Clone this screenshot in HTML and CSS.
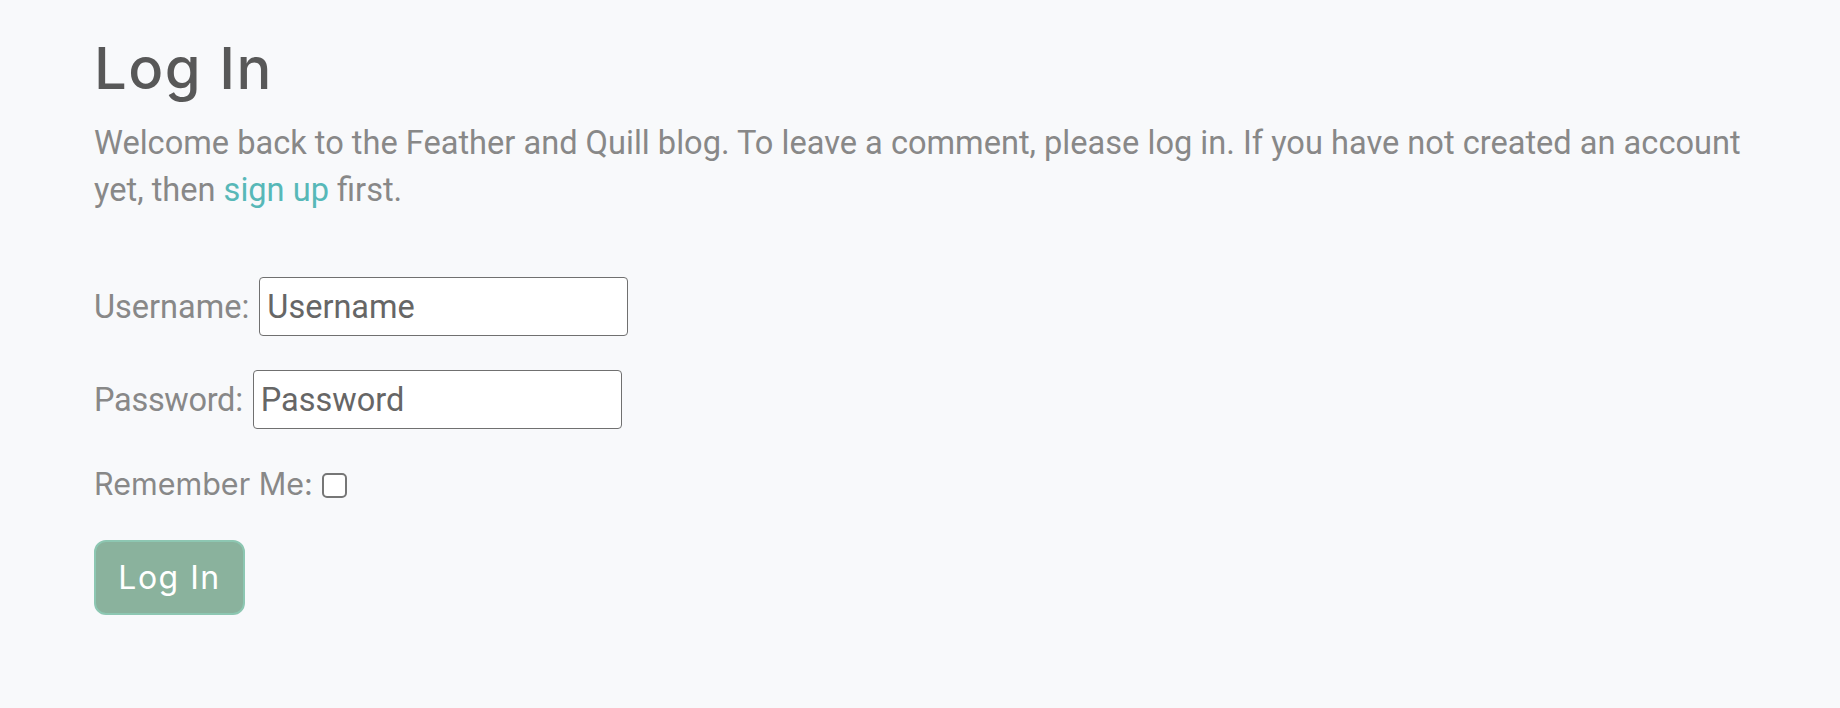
FILE: index.html
```html
<!DOCTYPE html>
<html lang="en">
<head>
<meta charset="utf-8">
<title>Log In</title>
<link rel="stylesheet" href="styles.css">
</head>
<body>
<main class="page">
  <h1 class="title">Log In</h1>
  <p class="intro">Welcome back to the Feather and Quill blog. To leave a comment, please log in. If you have not created an account yet, then <a class="link" href="#">sign up</a> first.</p>
  <form class="form">
    <div class="row">
      <label class="label" for="username">Username:</label>
      <input class="field field-user" id="username" type="text" placeholder="Username">
    </div>
    <div class="row">
      <label class="label label-pass" for="password">Password:</label>
      <input class="field" id="password" type="password" placeholder="Password">
    </div>
    <div class="row row-check">
      <label class="label label-alt" for="remember">Remember Me:</label>
      <input class="check" id="remember" type="checkbox">
    </div>
    <div class="row row-btn">
      <button class="btn" type="button">Log In</button>
    </div>
  </form>
</main>
</body>
</html>
```

FILE: styles.css
```css
html, body {
  margin: 0;
  padding: 0;
  background: #f8f9fb;
}

.page {
  padding: 34px 94px 0;
  font-family: Roboto, "Liberation Sans", sans-serif;
  color: #888888;
}

.title {
  margin: 0;
  font-family: Inter, "Noto Sans", sans-serif;
  font-weight: 500;
  font-size: 58px;
  line-height: 68px;
  color: #585858;
  letter-spacing: 1.5px;
}

.intro {
  margin: 18px 0 0;
  max-width: 1690px;
  font-size: 32.6px;
  line-height: 47px;
}

.link {
  color: #57b8b8;
  text-decoration: none;
}

.form {
  margin-top: 63px;
  display: flex;
  flex-direction: column;
}

.row {
  display: flex;
  align-items: center;
  gap: 10px;
  height: 59px;
}

.row + .row {
  margin-top: 34px;
}

.label {
  font-size: 32.5px;
  color: #888888;
}

.label-pass {
  letter-spacing: -0.3px;
}

.field {
  box-sizing: border-box;
  width: 369px;
  height: 59px;
  margin: 0;
  padding: 0 7px;
  border: 1.5px solid #707070;
  border-radius: 4px;
  background: #ffffff;
  font-family: Roboto, "Liberation Sans", sans-serif;
  font-size: 32.5px;
  color: #666666;
  outline: none;
}

.field::placeholder {
  color: #666666;
  opacity: 1;
}

.row + .row-check {
  margin-top: 41px;
}

.row-check {
  height: 30px;
  align-items: flex-end;
  gap: 9px;
}

.label-alt {
  font-family: Inter, "Noto Sans", sans-serif;
  font-size: 30.5px;
  line-height: 32px;
}

.check {
  appearance: none;
  -webkit-appearance: none;
  box-sizing: border-box;
  width: 25px;
  height: 25px;
  margin: 0 0 2px;
  border: 2px solid #767676;
  border-radius: 5px;
  background: #ffffff;
}

.row + .row-btn {
  margin-top: 40px;
}

.row-btn {
  height: auto;
}

.btn {
  box-sizing: border-box;
  width: 151px;
  height: 75px;
  padding: 0;
  border: 2px solid #8dc7b2;
  border-radius: 12px;
  background: #8ab29d;
  color: #ffffff;
  font-family: Inter, "Noto Sans", sans-serif;
  font-size: 32px;
  font-weight: 400;
  letter-spacing: 1.5px;
}
```
